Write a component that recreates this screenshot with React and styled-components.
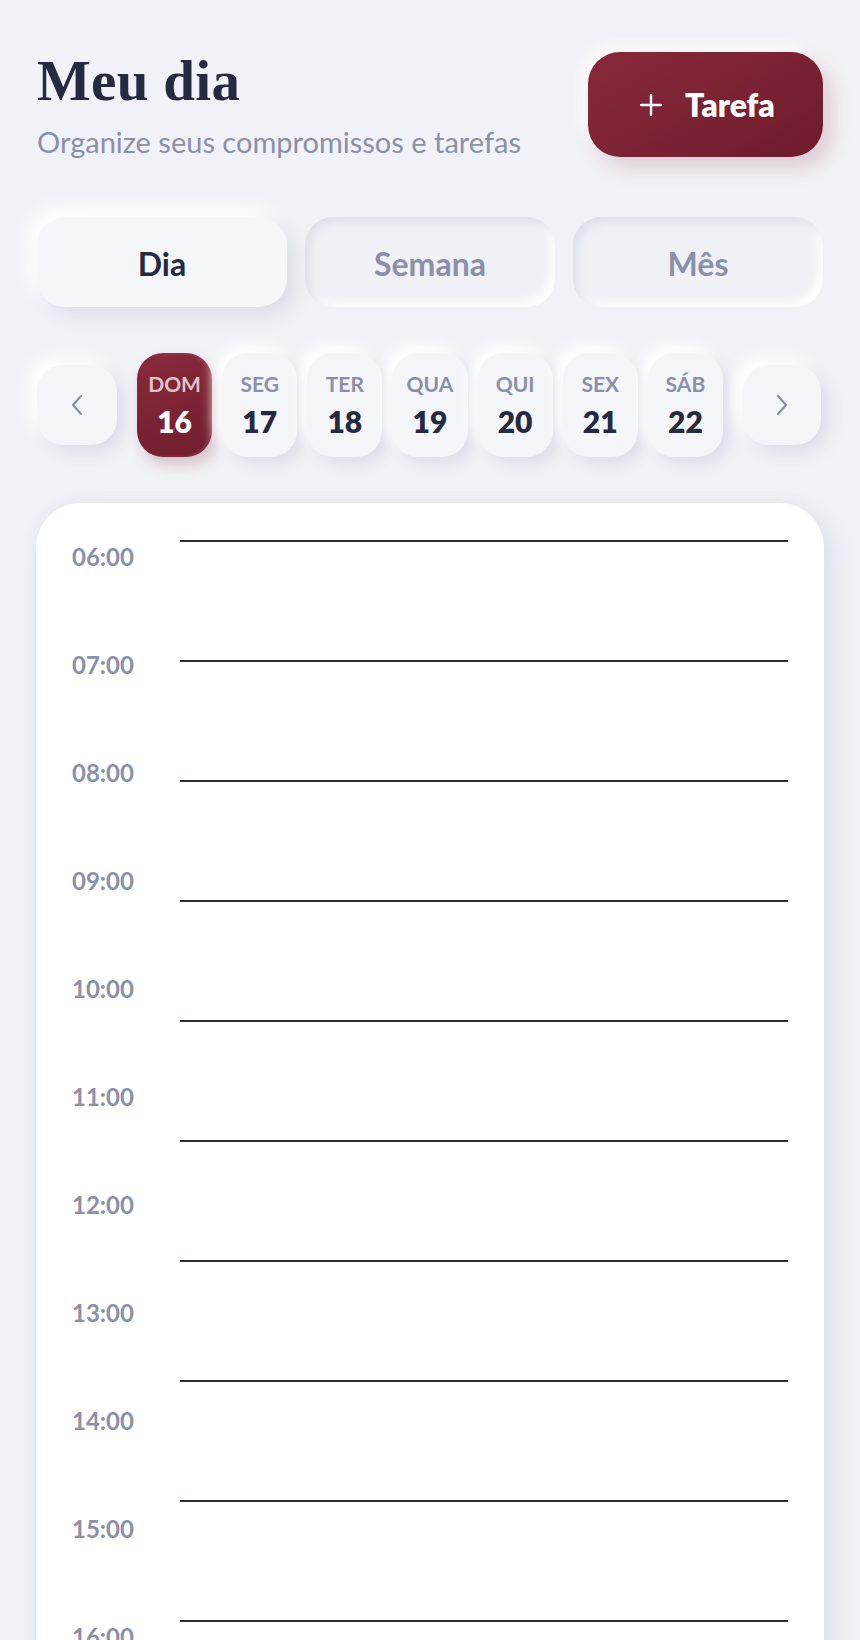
import React from "react";
import styled, { createGlobalStyle } from "styled-components";

const Global = createGlobalStyle`
  html, body { margin: 0; padding: 0; background: #f1f2f7; }
  body { font-family: Lato, "Noto Sans", sans-serif; color: #262a40; }
  * { box-sizing: border-box; }
`;

const Page = styled.div`
  padding: 52px 37px 0 37px;
  height: 1640px;
  overflow: hidden;
`;

const Header = styled.header`
  display: flex;
  justify-content: space-between;
  align-items: flex-start;
  height: 106px;
`;

const TitleBlock = styled.div`
  display: flex;
  flex-direction: column;
`;

const Title = styled.h1`
  margin: 0;
  font-family: "Liberation Serif", "DejaVu Serif", serif;
  font-weight: 700;
  font-size: 57px;
  line-height: 1;
  color: #262a40;
  letter-spacing: 0.3px;
`;

const Subtitle = styled.p`
  margin: 16px 0 0 0;
  font-size: 29px;
  line-height: 1.2;
  color: #8a90a8;
  font-weight: 400;
`;

const AddButton = styled.button`
  width: 235px;
  height: 105px;
  border: none;
  border-radius: 32px;
  background: linear-gradient(150deg, #88293b 0%, #7a2233 55%, #6e1b2b 100%);
  color: #fff;
  display: flex;
  align-items: center;
  justify-content: center;
  gap: 23px;
  font-family: Lato, sans-serif;
  font-weight: 800;
  font-size: 32px;
  padding: 0 0 0 4px;
  box-shadow: 8px 10px 20px rgba(150, 60, 80, 0.22), -6px -6px 14px rgba(255, 255, 255, 0.9);
`;

const Tabs = styled.div`
  margin-top: 59px;
  display: grid;
  grid-template-columns: repeat(3, 1fr);
  gap: 18px;
`;

const Tab = styled.button`
  height: 90px;
  border: none;
  border-radius: 28px;
  font-family: Lato, sans-serif;
  font-weight: 700;
  font-size: 32px;
  padding-top: 4px;
  color: ${(p) => (p.$active ? "#262a40" : "#8a90a8")};
  background: ${(p) => (p.$active ? "#f5f6fa" : "#f0f1f6")};
  box-shadow: ${(p) =>
    p.$active
      ? "9px 9px 18px #dcdfe9, -9px -9px 18px #ffffff"
      : "inset 5px 5px 10px #dde0ea, inset -5px -5px 10px #ffffff"};
`;

const DayRow = styled.div`
  margin-top: 46px;
  display: grid;
  grid-template-columns: 80px 1fr 80px;
  gap: 20px;
  align-items: center;
`;

const NavButton = styled.button`
  width: ${(p) => p.$w}px;
  height: 80px;
  border: none;
  border-radius: 26px;
  background: #f4f5f9;
  display: flex;
  align-items: center;
  justify-content: center;
  color: #858ba2;
  padding: 0;
  box-shadow: 8px 8px 16px #dcdfe9, -8px -8px 16px #ffffff;
`;

const Days = styled.div`
  display: flex;
  gap: 10px;
`;

const DayTile = styled.div`
  flex: 1;
  height: 104px;
  border-radius: 26px;
  display: flex;
  flex-direction: column;
  align-items: center;
  justify-content: center;
  gap: 7px;
  background: ${(p) =>
    p.$active ? "linear-gradient(160deg, #8a2b3c 0%, #7a2233 60%, #721d2d 100%)" : "#f4f5f9"};
  box-shadow: ${(p) =>
    p.$active
      ? "5px 8px 14px rgba(140, 50, 70, 0.25), inset -3px 0 4px rgba(255,255,255,0.12)"
      : "7px 7px 14px #dcdfe9, -7px -7px 14px #ffffff"};
`;

const DayName = styled.span`
  font-size: 21px;
  font-weight: 700;
  line-height: 1.2;
  color: ${(p) => (p.$active ? "#dcc4cb" : "#8a90a8")};
`;

const DayNum = styled.span`
  font-size: 30px;
  font-weight: 800;
  line-height: 1.2;
  color: ${(p) => (p.$active ? "#ffffff" : "#262a40")};
`;

const Card = styled.section`
  margin: 46px -1px 0 -1px;
  background: #ffffff;
  border-radius: 44px;
  padding: 0 36px 40px 36px;
  display: grid;
  grid-template-columns: 108px 1fr;
  box-shadow: 0 0 14px #e2e5ef, 10px 10px 24px #dde0ea;
`;

const Labels = styled.div`
  padding-top: 39.5px;
  display: flex;
  flex-direction: column;
`;

const TimeLabel = styled.div`
  height: 108px;
  font-size: 24px;
  font-weight: 700;
  line-height: 1.2;
  color: #8a90a8;
`;

const Slots = styled.div`
  padding-top: 37px;
  display: flex;
  flex-direction: column;
`;

const Slot = styled.div`
  height: 120px;
  border-top: 2px solid #262a40;
`;

const Chevron = ({ dir }) => (
  <svg width="12" height="20" viewBox="0 0 12 20" fill="none">
    <path
      d={dir === "left" ? "M10 1 L2 10 L10 19" : "M2 1 L10 10 L2 19"}
      stroke="currentColor"
      strokeWidth="2"
      strokeLinecap="round"
      strokeLinejoin="round"
    />
  </svg>
);

const PlusIcon = () => (
  <svg width="22" height="22" viewBox="0 0 22 22" fill="none">
    <path d="M11 1 V21 M1 11 H21" stroke="#fff" strokeWidth="2.4" strokeLinecap="round" />
  </svg>
);

const days = [
  ["DOM", "16"],
  ["SEG", "17"],
  ["TER", "18"],
  ["QUA", "19"],
  ["QUI", "20"],
  ["SEX", "21"],
  ["SÁB", "22"],
];

const hours = Array.from({ length: 11 }, (_, i) => `${String(6 + i).padStart(2, "0")}:00`);

export default function App() {
  return (
    <>
      <Global />
      <Page>
        <Header>
          <TitleBlock>
            <Title>Meu dia</Title>
            <Subtitle>Organize seus compromissos e tarefas</Subtitle>
          </TitleBlock>
          <AddButton>
            <PlusIcon />
            <span>Tarefa</span>
          </AddButton>
        </Header>

        <Tabs>
          <Tab $active>Dia</Tab>
          <Tab>Semana</Tab>
          <Tab>Mês</Tab>
        </Tabs>

        <DayRow>
          <NavButton $w={80}>
            <Chevron dir="left" />
          </NavButton>
          <Days>
            {days.map(([n, d], i) => (
              <DayTile key={n} $active={i === 0}>
                <DayName $active={i === 0}>{n}</DayName>
                <DayNum $active={i === 0}>{d}</DayNum>
              </DayTile>
            ))}
          </Days>
          <NavButton $w={78}>
            <Chevron dir="right" />
          </NavButton>
        </DayRow>

        <Card>
          <Labels>
            {hours.map((h) => (
              <TimeLabel key={h}>{h}</TimeLabel>
            ))}
          </Labels>
          <Slots>
            {hours.map((h) => (
              <Slot key={h} />
            ))}
          </Slots>
        </Card>
      </Page>
    </>
  );
}
